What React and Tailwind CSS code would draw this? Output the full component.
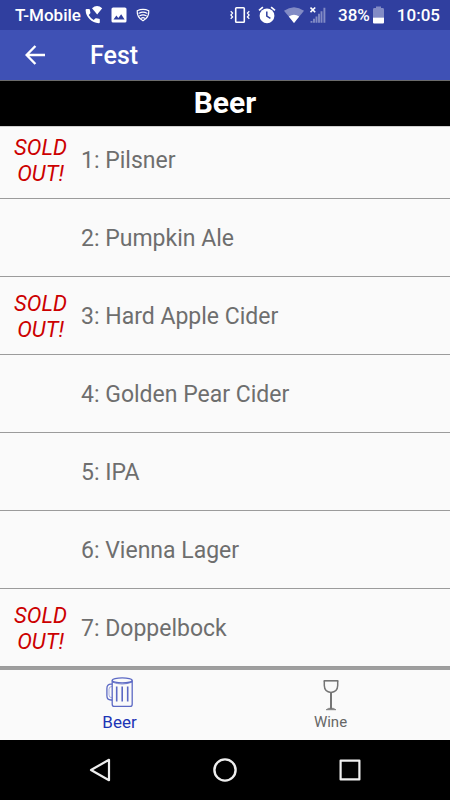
import React, { useState } from "react";

const beers = [
  { id: 1, name: "Pilsner", soldOut: true },
  { id: 2, name: "Pumpkin Ale", soldOut: false },
  { id: 3, name: "Hard Apple Cider", soldOut: true },
  { id: 4, name: "Golden Pear Cider", soldOut: false },
  { id: 5, name: "IPA", soldOut: false },
  { id: 6, name: "Vienna Lager", soldOut: false },
  { id: 7, name: "Doppelbock", soldOut: true },
];

function StatusBar() {
  return (
    <div className="flex h-[30px] items-center justify-between bg-[#303f9f] pr-[10px] pl-[15px] text-[17px] leading-[20px] font-medium text-white">
      <div className="flex items-center">
        <span>T-Mobile</span>
        {/* wifi call */}
        <svg className="ml-1 h-5 w-[18px]" viewBox="0 0 18 20" fill="currentColor">
          <path d="M7 3.2Q12 -1 17.2 3.2L12.2 9.6Z" />
          <path d="M0.6 5Q0.6 4 1.6 4H4Q4.8 4 4.9 4.8Q5 6.2 5.4 7.4Q5.6 8 5.1 8.5L3.7 9.9Q5.6 13.2 8.7 14.9L10.2 13.4Q10.7 13 11.3 13.2Q12.6 13.6 14 13.7Q14.8 13.8 14.8 14.5V17.2Q14.8 18.2 13.8 18.2Q8.3 18 4.5 14.1Q0.8 10.2 0.6 5Z" />
        </svg>
        {/* picture */}
        <svg className="ml-2 h-4 w-4" viewBox="0 0 16 16">
          <rect x="0.5" y="0.5" width="15" height="15" rx="1.6" fill="#fff" />
          <path d="M2.5 12.5L5.4 8.6L7.3 11L10.2 7.2L13.6 12.5Z" fill="#303f9f" />
        </svg>
        {/* wifi shield */}
        <svg
          className="ml-2 h-4 w-4"
          viewBox="0 0 16 16"
          fill="none"
          stroke="currentColor"
          strokeWidth="1.2"
          strokeLinecap="round"
          strokeLinejoin="round"
        >
          <path d="M2.2 3.8Q8 1 13.8 3.8Q14.2 10.4 8 13.8Q1.8 10.4 2.2 3.8Z" />
          <path d="M4 6.2Q8 4.2 12 6.2M4.8 8.8Q8 7 11.2 8.8M6.3 11.2Q8 10.2 9.7 11.2" />
        </svg>
      </div>

      <div className="flex items-center">
        {/* vibrate */}
        <svg className="h-[18px] w-5" viewBox="0 0 20 18" fill="none" stroke="currentColor">
          <rect x="5.7" y="1.8" width="8.6" height="14.4" rx="0.8" strokeWidth="1.6" />
          <path
            d="M0.7 5.2L2.6 7L0.9 9L2.6 11L0.7 12.8M19.3 5.2L17.4 7L19.1 9L17.4 11L19.3 12.8"
            strokeWidth="1.2"
          />
        </svg>
        {/* alarm */}
        <svg className="ml-2 h-[18px] w-[18px]" viewBox="0 0 18 18">
          <circle cx="9" cy="9.8" r="7.4" fill="#fff" />
          <path d="M1 4.4L4.9 1.1M17 4.4L13.1 1.1" stroke="#fff" strokeWidth="1.7" />
          <path d="M8.8 5.4V10.2L12.4 12.4" fill="none" stroke="#303f9f" strokeWidth="1.5" />
        </svg>
        {/* wifi */}
        <svg className="ml-2 h-[18px] w-5" viewBox="0 0 20 18" fill="#fff">
          <path d="M0 4.8Q10 -2.4 20 4.8L10 17Z" opacity="0.4" />
          <path d="M4.8 10.6Q10 7 15.2 10.6L10 17Z" />
        </svg>
        {/* mobile signal */}
        <svg className="ml-[6px] h-[18px] w-4" viewBox="0 0 16 18" fill="none" stroke="#fff">
          <path d="M0.5 1.5L5.2 6.2M5.2 1.5L0.5 6.2" strokeWidth="1.6" />
          <path
            d="M1.5 16.8V15M4 16.8V12.8M6.5 16.8V10.4M9 16.8V7.8M11.5 16.8V5.2M14.4 16.8V1.8"
            strokeWidth="1.9"
            opacity="0.4"
          />
        </svg>
        <span className="ml-3">38%</span>
        {/* battery */}
        <svg className="ml-[3px] h-[18px] w-[11px]" viewBox="0 0 11 18" fill="#fff">
          <path d="M0 3.4Q0 2 1.4 2H3V0.4H8V2H9.6Q11 2 11 3.4V11.5H0Z" opacity="0.4" />
          <path d="M0 11.5H11V16.4Q11 17.4 10 17.4H1Q0 17.4 0 16.4Z" />
        </svg>
        <span className="ml-[13px]">10:05</span>
      </div>
    </div>
  );
}

function BeerRow({ beer }) {
  return (
    <li className="flex h-[78px] items-center border-b border-[#9b9b9b] pt-[2px]">
      <span className="w-[81px] shrink-0 text-center text-[22px] leading-[26px] text-[#cc0000] italic">
        {beer.soldOut && (
          <>
            SOLD
            <br />
            OUT!
          </>
        )}
      </span>
      <span className="text-[23px] leading-[28px] text-[#6e6e6e]">
        {beer.id}: {beer.name}
      </span>
    </li>
  );
}

function BeerIcon() {
  return (
    <svg
      className="h-[34px] w-7"
      viewBox="0 0 28 34"
      fill="none"
      stroke="#5c69c4"
      strokeWidth="1.3"
      strokeLinejoin="round"
    >
      <ellipse cx="16.2" cy="3.4" rx="10" ry="2.5" />
      <path d="M6.2 3.4V27.2Q6.2 29.4 8.4 29.4H24Q26.2 29.4 26.2 27.2V3.4" />
      <path d="M6.2 7.2H5Q0.9 7.2 0.9 11.4V18.8Q0.9 23 5 23H6.2" />
      <path d="M6.2 9.4Q3 9.4 3 12.2V18Q3 20.8 6.2 20.8" strokeWidth="0.5" />
      <path d="M6.4 5.2Q16.2 8.8 26 5.2" strokeWidth="0.8" />
      <path d="M10.7 9.4V24.6M16.2 9.4V24.6M21.7 9.4V24.6" strokeWidth="1.6" />
    </svg>
  );
}

function WineIcon() {
  return (
    <svg className="h-[34px] w-7" viewBox="0 0 28 34" fill="none" stroke="#757575">
      <path d="M6.6 3.8H21.4" strokeWidth="1.6" />
      <path d="M7.3 4V8.6Q7.5 15 14 15.4Q20.5 15 20.7 8.6V4" strokeWidth="1.5" />
      <path d="M14 15.4V32" strokeWidth="2" />
      <path d="M9 32.8Q11 31 14 31Q17 31 19 32.8Z" fill="#757575" strokeWidth="0.6" />
    </svg>
  );
}

function App() {
  const [tab, setTab] = useState("beer");

  return (
    <div className="flex min-h-screen flex-col bg-[#fafafa] font-[Roboto,sans-serif]">
      <StatusBar />

      <header className="flex h-[50px] items-center bg-[#3f51b5] pl-[25px] text-white">
        <button type="button" aria-label="Back" className="h-5 w-5">
          <svg
            className="h-5 w-5"
            viewBox="0 0 20 20"
            fill="none"
            stroke="currentColor"
            strokeWidth="2.4"
          >
            <path d="M20 10H2.4M10.4 1L1.6 10L10.4 19" />
          </svg>
        </button>
        <h1 className="ml-[45px] pt-[2px] text-[25px] leading-[28px] font-medium">Fest</h1>
      </header>

      <main className="flex flex-1 flex-col">
        <h2 className="h-[46px] border-t border-[#6b6b6b] bg-black text-center text-[30px] leading-[43px] font-bold text-white">
          Beer
        </h2>
        {/* list is scrolled a little way under the heading */}
        <ul className="flex-1 overflow-hidden border-t border-[#d0d0d0] *:first:-mt-[6px]">
          {beers.map((beer) => (
            <BeerRow key={beer.id} beer={beer} />
          ))}
        </ul>
      </main>

      <nav className="flex h-[73px] border-t-[3px] border-[#9e9e9e] px-[14px]">
        <button
          type="button"
          onClick={() => setTab("beer")}
          aria-pressed={tab === "beer"}
          className="flex flex-1 flex-col items-center pt-[7px] text-[17px] leading-[22px] text-[#1c34b5]"
        >
          <BeerIcon />
          Beer
        </button>
        <button
          type="button"
          onClick={() => setTab("wine")}
          aria-pressed={tab === "wine"}
          className="flex flex-1 flex-col items-center pt-[7px] text-[15px] leading-[22px] text-[#666666]"
        >
          <WineIcon />
          Wine
        </button>
      </nav>

      <div className="flex h-[60px] items-center bg-black px-[38px] text-[#eeeeee]">
        <button type="button" aria-label="System back" className="flex flex-1 justify-center">
          <svg
            className="h-6 w-6"
            viewBox="0 0 24 24"
            fill="none"
            stroke="currentColor"
            strokeWidth="2.2"
            strokeLinejoin="round"
          >
            <path d="M21 1.8V22.2L3 12Z" />
          </svg>
        </button>
        <button type="button" aria-label="Home" className="flex flex-1 justify-center">
          <svg
            className="h-6 w-6"
            viewBox="0 0 24 24"
            fill="none"
            stroke="currentColor"
            strokeWidth="2.4"
          >
            <circle cx="12" cy="12" r="10.6" />
          </svg>
        </button>
        <button type="button" aria-label="Recent apps" className="flex flex-1 justify-center">
          <svg
            className="h-6 w-6"
            viewBox="0 0 24 24"
            fill="none"
            stroke="currentColor"
            strokeWidth="2.2"
            strokeLinejoin="round"
          >
            <rect x="2.6" y="2.6" width="18.8" height="18.8" />
          </svg>
        </button>
      </div>
    </div>
  );
}

export default App;
